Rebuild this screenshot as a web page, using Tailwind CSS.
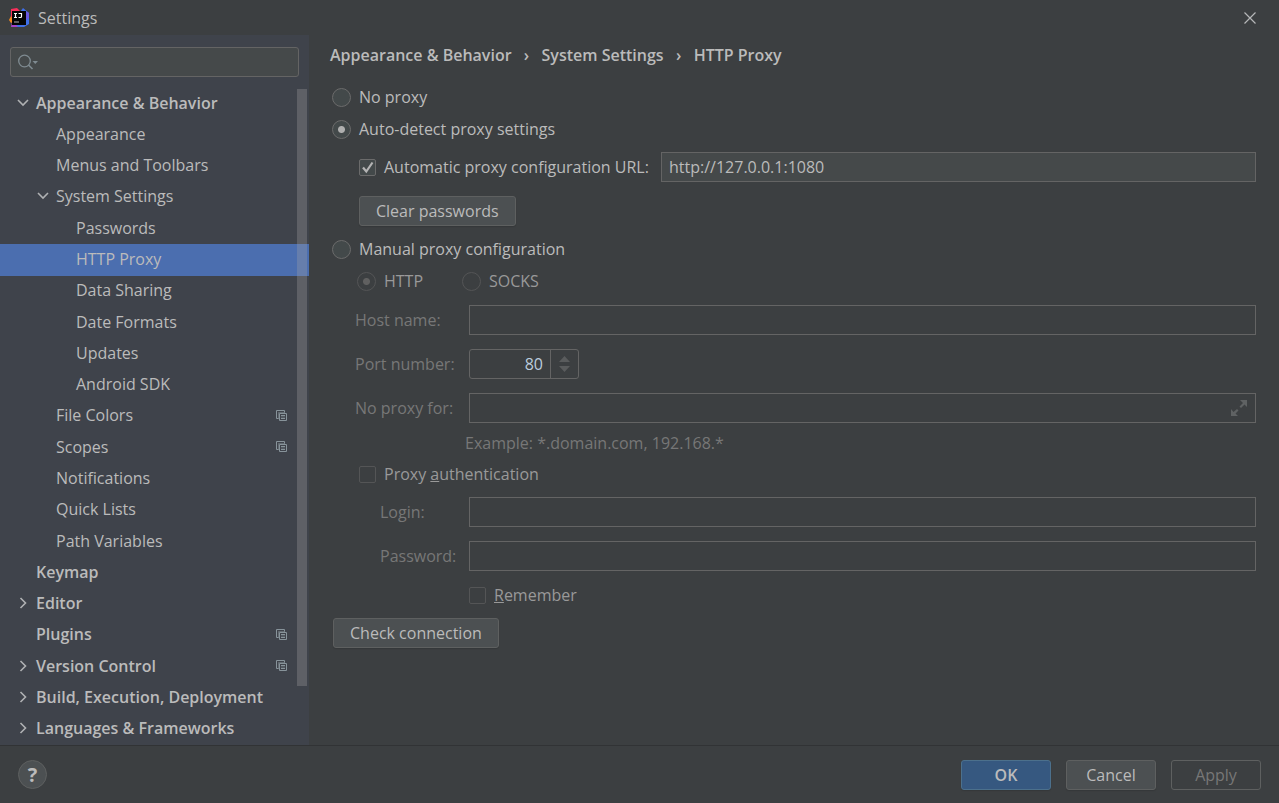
<!DOCTYPE html>
<html lang="en">
<head>
<meta charset="utf-8">
<meta name="viewport" content="width=device-width, initial-scale=1">
<title>Settings</title>
<script src="https://cdn.jsdelivr.net/npm/@tailwindcss/browser@4"></script>
</head>
<body class="flex h-screen flex-col overflow-hidden bg-[#3c3f41] font-['Open_Sans','Noto_Sans',sans-serif] text-base leading-5 text-[#bbbbbb]">
<svg class="hidden" aria-hidden="true">
  <symbol id="down" viewBox="0 0 12 12"><path d="M1 3l5 5 5-5" fill="none" stroke="#afb1b3" stroke-width="1.6"/></symbol>
  <symbol id="right" viewBox="0 0 12 12"><path d="M3.500 1l5 5-5 5" fill="none" stroke="#afb1b3" stroke-width="1.6"/></symbol>
  <symbol id="copy" viewBox="0 0 11 11"><path d="M2.500 8.500h-2v-8h8v2" fill="none" stroke="#87939a"/><path d="M2.500 9V2.500H9" fill="none" stroke="#87939a" stroke-opacity=".5"/><path d="M3.500 3.500h7v7h-7zM5 5.500h4M5 8.500h4" fill="none" stroke="#87939a"/><path d="M5 7h4" stroke="#87939a" stroke-opacity=".6"/></symbol>
</svg>

<header class="flex h-[35px] shrink-0 items-center pl-[9px] pr-[23px]">
  <svg class="mr-[9px] size-5" viewBox="0 0 20 20" aria-hidden="true">
    <path d="M2 1l6-1 4 4v8l-8 3-2-5z" fill="#fb2f5b"/>
    <path d="M0 12l2-4 3 6-3 1z" fill="#f98a1d"/>
    <path d="M2 19l1-5 7 3-1 2z" fill="#a742c8"/>
    <path d="M11 4l3-4 6 5v11l-5 3H9l-2-2 9-3z" fill="#3f6fe8"/>
    <path d="M16 3l4 2v5l-3 2z" fill="#6a57df"/>
    <rect x="3" y="3" width="14" height="14" fill="#050505"/>
    <path d="M5 5.500h3M6.500 5.500v4M5 9.500h3M9.500 5.500h3v3q0 1-1 1h-2" fill="none" stroke="#fff" stroke-width="1.200"/>
    <path d="M5 14h5" stroke="#9a9a9a" stroke-width="1.200"/>
  </svg>
  <h1>Settings</h1>
  <button type="button" aria-label="Close" class="ml-auto"><svg class="size-3" viewBox="0 0 12 12"><path d="M.500.500l11 11M11.500.500l-11 11" stroke="#b5b7b8" stroke-width="1.200"/></svg></button>
</header>

<div class="flex min-h-0 flex-1">
  <aside class="relative flex w-[309px] shrink-0 flex-col bg-[#3f434b]">
    <label class="mx-[10px] mt-3 mb-[11px] flex h-[30px] items-center rounded-[3px] border border-[#646464] bg-[#45494a] pl-[7px] pr-2">
      <svg class="h-4 w-5 shrink-0" viewBox="0 0 20 16" aria-hidden="true"><circle cx="6.500" cy="7" r="5.800" fill="none" stroke="#7f8b91" stroke-width="1.300"/><path d="M10.500 11l4 4" stroke="#7f8b91" stroke-width="1.600"/><path d="M14.500 7h5.500l-2.750 3z" fill="#7f8b91"/></svg>
      <input type="search" aria-label="Search settings" class="min-w-0 flex-1 bg-transparent outline-none">
    </label>
    <nav class="flex min-h-0 flex-1 flex-col [&>a]:flex [&>a]:flex-1 [&>a]:items-center [&>a]:pr-[22px] [&>a]:pb-[2px] [&_svg]:shrink-0">
      <a href="#" class="pl-[17px] font-semibold"><svg class="mr-[7px] size-3"><use href="#down"/></svg>Appearance &amp; Behavior</a>
      <a href="#" class="pl-14">Appearance</a>
      <a href="#" class="pl-14">Menus and Toolbars</a>
      <a href="#" class="pl-[37px]"><svg class="mr-[7px] size-3"><use href="#down"/></svg>System Settings</a>
      <a href="#" class="pl-[76px]">Passwords</a>
      <a href="#" class="bg-[#4b6eaf] pl-[76px]" aria-current="page">HTTP Proxy</a>
      <a href="#" class="pl-[76px]">Data Sharing</a>
      <a href="#" class="pl-[76px]">Date Formats</a>
      <a href="#" class="pl-[76px]">Updates</a>
      <a href="#" class="pl-[76px]">Android SDK</a>
      <a href="#" class="pl-14">File Colors<svg class="ml-auto size-[11px]"><use href="#copy"/></svg></a>
      <a href="#" class="pl-14">Scopes<svg class="ml-auto size-[11px]"><use href="#copy"/></svg></a>
      <a href="#" class="pl-14">Notifications</a>
      <a href="#" class="pl-14">Quick Lists</a>
      <a href="#" class="pl-14">Path Variables</a>
      <a href="#" class="pl-9 font-semibold">Keymap</a>
      <a href="#" class="pl-[17px] font-semibold"><svg class="mr-[7px] size-3"><use href="#right"/></svg>Editor</a>
      <a href="#" class="pl-9 font-semibold">Plugins<svg class="ml-auto size-[11px]"><use href="#copy"/></svg></a>
      <a href="#" class="pl-[17px] font-semibold"><svg class="mr-[7px] size-3"><use href="#right"/></svg>Version Control<svg class="ml-auto size-[11px]"><use href="#copy"/></svg></a>
      <a href="#" class="pl-[17px] font-semibold"><svg class="mr-[7px] size-3"><use href="#right"/></svg>Build, Execution, Deployment</a>
      <a href="#" class="pl-[17px] font-semibold"><svg class="mr-[7px] size-3"><use href="#right"/></svg>Languages &amp; Frameworks</a>
    </nav>
    <div class="absolute top-[54px] right-[2px] bottom-[59px] w-[10px] bg-[#a6a6a6]/30"></div>
  </aside>

  <main class="min-w-0 flex-1 pl-[21px] pr-[23px]">
    <nav aria-label="Breadcrumb" class="flex h-10 items-center font-semibold">
      <a href="#">Appearance &amp; Behavior</a><span class="w-[30px] text-center">›</span>
      <a href="#">System Settings</a><span class="w-[30px] text-center">›</span>
      <a href="#">HTTP Proxy</a>
    </nav>
    <form class="mt-[6px] pl-[2px]">
      <label class="flex h-8 items-center gap-2"><input type="radio" name="mode" class="size-[19px] appearance-none rounded-full border border-[#6b6b6b] bg-[#43494a] checked:bg-[radial-gradient(circle,#afafaf_3px,#43494a_4px)]">No proxy</label>
      <label class="flex h-8 items-center gap-2"><input type="radio" name="mode" checked class="size-[19px] appearance-none rounded-full border border-[#6b6b6b] bg-[#43494a] checked:bg-[radial-gradient(circle,#afafaf_3px,#43494a_4px)]">Auto-detect proxy settings</label>
      <div class="mt-[7px] flex h-[30px] items-center pl-[27px]">
        <span class="grid shrink-0">
          <input id="auto" type="checkbox" checked class="peer size-[17px] appearance-none rounded-[2px] border border-[#6b6b6b] bg-[#43494a] [grid-area:1/1]">
          <svg class="pointer-events-none invisible size-[17px] [grid-area:1/1] peer-checked:visible" viewBox="0 0 17 17"><path d="M4 8.500l3.300 4L13.500 3.500" fill="none" stroke="#b4b4b4" stroke-width="2.200"/></svg>
        </span>
        <label for="auto" class="ml-2 w-[277px] shrink-0 whitespace-nowrap">Automatic proxy configuration URL:</label>
        <input type="text" aria-label="Proxy configuration URL" value="http://127.0.0.1:1080" class="h-[30px] min-w-0 flex-1 border border-[#646464] bg-[#45494a] px-[7px]">
      </div>
      <button type="button" class="mt-[14px] ml-[27px] block h-[30px] rounded-[3px] border border-[#5e6060] bg-[#4c5052] px-4 shadow-[0_1px_1px_#35383a]">Clear passwords</button>
      <label class="mt-[7px] flex h-8 items-center gap-2"><input type="radio" name="mode" class="size-[19px] appearance-none rounded-full border border-[#6b6b6b] bg-[#43494a] checked:bg-[radial-gradient(circle,#afafaf_3px,#43494a_4px)]">Manual proxy configuration</label>

      <div class="flex h-8 items-center pl-[25px] text-[#999999]">
        <label class="flex w-[105px] items-center gap-2"><input type="radio" name="kind" checked disabled class="size-[19px] appearance-none rounded-full border border-[#545556] checked:bg-[radial-gradient(circle,#606060_3px,#3c3f41_4px)]">HTTP</label>
        <label class="flex items-center gap-2"><input type="radio" name="kind" disabled class="size-[19px] appearance-none rounded-full border border-[#545556]">SOCKS</label>
      </div>
      <div class="mt-2 flex h-[30px] items-center pl-[23px]">
        <label for="host" class="w-[114px] shrink-0 text-[#777777]">Host name:</label>
        <input id="host" type="text" disabled class="h-[30px] min-w-0 flex-1 border border-[#646464] px-[7px]">
      </div>
      <div class="mt-[14px] flex h-[30px] items-center pl-[23px]">
        <label for="port" class="w-[114px] shrink-0 text-[#777777]">Port number:</label>
        <div class="flex h-[30px] w-[110px] rounded-[3px] border border-[#646464]">
          <input id="port" type="text" inputmode="numeric" value="80" disabled class="min-w-0 flex-1 pr-[7px] text-right text-[#bbccdd]">
          <div class="flex w-7 flex-col items-center justify-center gap-1 border-l border-[#646464]">
            <button type="button" disabled aria-label="Increase"><svg class="block h-[6px] w-[11px]" viewBox="0 0 11 6"><path d="M0 6L5.500 0 11 6z" fill="#5a5c5d"/></svg></button>
            <button type="button" disabled aria-label="Decrease"><svg class="block h-[6px] w-[11px]" viewBox="0 0 11 6"><path d="M0 0L5.500 6 11 0z" fill="#5a5c5d"/></svg></button>
          </div>
        </div>
      </div>
      <div class="mt-[14px] flex h-[30px] items-center pl-[23px]">
        <label for="bypass" class="w-[114px] shrink-0 text-[#777777]">No proxy for:</label>
        <div class="flex h-[30px] min-w-0 flex-1 items-center border border-[#646464] pr-2">
          <input id="bypass" type="text" disabled class="min-w-0 flex-1 px-[7px]">
          <button type="button" disabled aria-label="Expand"><svg class="block size-4" viewBox="0 0 16 16"><path d="M9 0h7v7l-2.500-2.500-3.500 3.500-1.500-1.500 3.500-3.500zM0 9v7h7l-2.500-2.500 3-3-1.500-1.500-3.500 3z" fill="#5f6263"/></svg></button>
        </div>
      </div>
      <p class="mt-[5px] flex h-[30px] items-center pl-[133px] text-[#777777]">Example: *.domain.com, 192.168.*</p>
      <label class="flex h-8 items-center pl-[27px] text-[#999999]"><input type="checkbox" disabled class="mr-2 size-[17px] appearance-none rounded-[2px] border border-[#545556]"><span>Proxy <u>a</u>uthentication</span></label>
      <div class="mt-[7px] flex h-[30px] items-center pl-12">
        <label for="login" class="w-[89px] shrink-0 text-[#777777]">Login:</label>
        <input id="login" type="text" disabled class="h-[30px] min-w-0 flex-1 border border-[#646464] px-[7px]">
      </div>
      <div class="mt-[14px] flex h-[30px] items-center pl-12">
        <label for="pass" class="w-[89px] shrink-0 text-[#777777]">Password:</label>
        <input id="pass" type="password" disabled class="h-[30px] min-w-0 flex-1 border border-[#646464] px-[7px]">
      </div>
      <label class="mt-2 flex h-8 items-center pl-[137px] text-[#999999]"><input type="checkbox" disabled class="mr-2 size-[17px] appearance-none rounded-[2px] border border-[#545556]"><span><u>R</u>emember</span></label>
      <button type="button" class="mt-[7px] ml-px block h-[30px] rounded-[3px] border border-[#5e6060] bg-[#4c5052] px-4 shadow-[0_1px_1px_#35383a]">Check connection</button>
    </form>
  </main>
</div>

<footer class="flex h-[58px] shrink-0 items-center gap-[15px] border-t border-[#313335] pl-[18px] pr-[18px]">
  <button type="button" aria-label="Help" class="mr-auto size-[29px] rounded-full border border-[#5e6060] bg-[#4c5052] text-xl font-bold leading-none">?</button>
  <button type="button" class="h-[30px] w-[90px] rounded-[3px] border border-[#4c708c] bg-[#365880] font-semibold shadow-[0_1px_1px_#35383a]">OK</button>
  <button type="button" class="h-[30px] w-[90px] rounded-[3px] border border-[#5e6060] bg-[#4c5052] shadow-[0_1px_1px_#35383a]">Cancel</button>
  <button type="button" disabled class="h-[30px] w-[90px] rounded-[3px] border border-[#5e6060] text-[#777777]">Apply</button>
</footer>
</body>
</html>
